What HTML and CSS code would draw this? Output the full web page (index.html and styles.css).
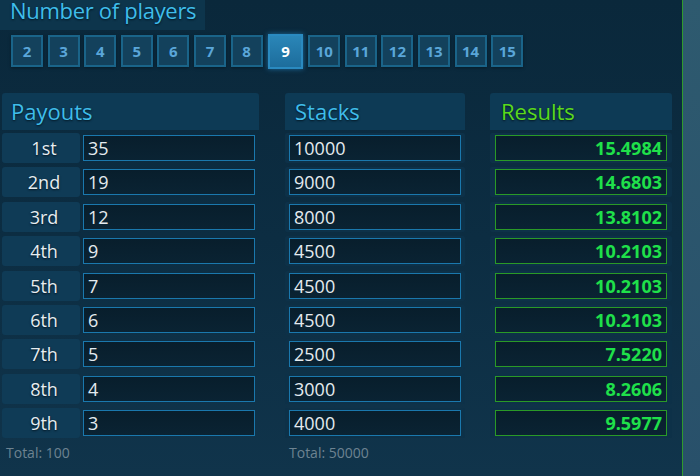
FILE: index.html
```html
<!DOCTYPE html>
<html>
<head>
<meta charset="utf-8">
<link rel="stylesheet" href="styles.css">
</head>
<body>
<div class="app">
  <div class="title">Number of players</div>
  <div class="players">
    <div class="pbtn">2</div>
    <div class="pbtn">3</div>
    <div class="pbtn">4</div>
    <div class="pbtn">5</div>
    <div class="pbtn">6</div>
    <div class="pbtn">7</div>
    <div class="pbtn">8</div>
    <div class="pbtn sel">9</div>
    <div class="pbtn">10</div>
    <div class="pbtn">11</div>
    <div class="pbtn">12</div>
    <div class="pbtn">13</div>
    <div class="pbtn">14</div>
    <div class="pbtn">15</div>
  </div>
  <div class="columns">
    <section class="panel payouts">
      <h2 class="ph">Payouts</h2>
      <div class="rows">
        <div class="row"><span class="lbl">1st</span><div class="field">35</div></div>
        <div class="row"><span class="lbl">2nd</span><div class="field">19</div></div>
        <div class="row"><span class="lbl">3rd</span><div class="field">12</div></div>
        <div class="row"><span class="lbl">4th</span><div class="field">9</div></div>
        <div class="row"><span class="lbl">5th</span><div class="field">7</div></div>
        <div class="row"><span class="lbl">6th</span><div class="field">6</div></div>
        <div class="row"><span class="lbl">7th</span><div class="field">5</div></div>
        <div class="row"><span class="lbl">8th</span><div class="field">4</div></div>
        <div class="row"><span class="lbl">9th</span><div class="field">3</div></div>
      </div>
      <div class="total">Total: 100</div>
    </section>
    <section class="panel stacks">
      <h2 class="ph">Stacks</h2>
      <div class="rows">
        <div class="row cell"><div class="field">10000</div></div>
        <div class="row cell"><div class="field">9000</div></div>
        <div class="row cell"><div class="field">8000</div></div>
        <div class="row cell"><div class="field">4500</div></div>
        <div class="row cell"><div class="field">4500</div></div>
        <div class="row cell"><div class="field">4500</div></div>
        <div class="row cell"><div class="field">2500</div></div>
        <div class="row cell"><div class="field">3000</div></div>
        <div class="row cell"><div class="field">4000</div></div>
      </div>
      <div class="total">Total: 50000</div>
    </section>
    <section class="panel results">
      <h2 class="ph green">Results</h2>
      <div class="rows">
        <div class="row cell"><div class="field res">15.4984</div></div>
        <div class="row cell"><div class="field res">14.6803</div></div>
        <div class="row cell"><div class="field res">13.8102</div></div>
        <div class="row cell"><div class="field res">10.2103</div></div>
        <div class="row cell"><div class="field res">10.2103</div></div>
        <div class="row cell"><div class="field res">10.2103</div></div>
        <div class="row cell"><div class="field res">7.5220</div></div>
        <div class="row cell"><div class="field res">8.2606</div></div>
        <div class="row cell"><div class="field res">9.5977</div></div>
      </div>
    </section>
  </div>
</div>
</body>
</html>
```
FILE: styles.css
```css
html, body {
  margin: 0;
  padding: 0;
}
body {
  width: 700px;
  height: 476px;
  overflow: hidden;
  background: linear-gradient(180deg, #2e5a6f 0%, #28506a 100%);
  font-family: "Open Sans", "Noto Sans", sans-serif;
}
.app {
  width: 682px;
  height: 476px;
  border-right: 1px solid #2f9a2c;
  background: linear-gradient(180deg, #0a283b 0%, #0c2d42 50%, #10344b 100%);
  box-sizing: content-box;
}
.title {
  display: inline-block;
  height: 30px;
  padding: 0 9px 9px 10px;
  font-size: 22px;
  line-height: 21px;
  letter-spacing: -0.3px;
  white-space: nowrap;
  color: #3fbdea;
  background: #0d354c;
  text-shadow: 0 1px 2px #031622;
  box-sizing: border-box;
  vertical-align: top;
}
.players {
  display: flex;
  align-items: center;
  gap: 4.6px;
  height: 35px;
  margin-top: 3.5px;
  padding-left: 11px;
}
.pbtn {
  width: 32px;
  height: 32px;
  box-sizing: border-box;
  border: 2px solid #1a6489;
  background: #13415c;
  color: #5aa6d9;
  font-weight: 700;
  font-size: 15px;
  line-height: 28px;
  text-align: center;
  box-shadow: 0 1px 3px rgba(0, 0, 0, 0.35);
}
.pbtn.sel {
  width: 35px;
  height: 35px;
  line-height: 31px;
  margin: 0 0.5px 0 1px;
  color: #ffffff;
  border: 2px solid #2a8ac0;
  background: linear-gradient(180deg, #2a86b8 0%, #1d6d9c 100%);
  box-shadow: 0 0 5px rgba(40, 150, 220, 0.6);
}
.columns {
  display: flex;
  margin-top: 24.5px;
  padding-left: 2px;
}
.panel {
  display: flex;
  flex-direction: column;
}
.payouts { width: 257px; margin-right: 26px; }
.stacks { width: 180px; margin-right: 25px; }
.results { width: 182px; }
.ph {
  margin: 0;
  height: 37px;
  padding-left: 9px;
  font-weight: 400;
  font-size: 22px;
  line-height: 37px;
  color: #3fbdea;
  background: #0d3a55;
  border-radius: 3px 3px 0 0;
  text-shadow: 0 1px 2px #031622;
}
.stacks .ph { padding-left: 10px; }
.results .ph { padding-left: 11px; }
.ph.green { color: #5ad91c; }
.rows {
  display: flex;
  flex-direction: column;
  gap: 4.375px;
  margin-top: 3px;
}
.row {
  display: flex;
  align-items: center;
  height: 30px;
}
.cell {
  padding: 0 4px;
  background: #0d3148;
  border-radius: 2px;
}
.results .cell { padding: 0 5px; }
.lbl {
  width: 78px;
  height: 30px;
  margin-right: 3px;
  background: #0f3b56;
  border-radius: 3px;
  color: #e6edf1;
  font-size: 18px;
  line-height: 30px;
  text-align: center;
  padding-left: 6px;
  box-sizing: border-box;
  text-shadow: 0 1px 2px #021420;
}
.field {
  width: 172px;
  height: 26px;
  box-sizing: border-box;
  border: 1px solid #1a78ad;
  background: linear-gradient(180deg, #081e2c 0%, #0a2333 100%);
  color: #e4ebef;
  font-size: 18px;
  line-height: 24px;
  padding-left: 4px;
}
.field.res {
  border-color: #2a9a27;
  color: #1fe04a;
  font-weight: 700;
  text-align: right;
  padding-left: 0;
  padding-right: 4px;
}
.total {
  margin-top: 4.5px;
  padding-left: 4px;
  font-size: 14px;
  line-height: 20px;
  color: #6d8391;
}
```
